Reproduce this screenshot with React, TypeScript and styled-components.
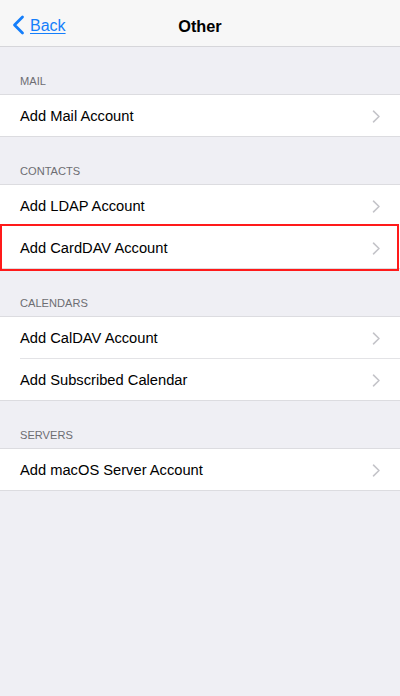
import styled, { createGlobalStyle } from "styled-components";
////////////////////////////////////////////////////////////////////////////////

type Row = { label: string; highlighted?: boolean };
type Section = { title: string; rows: Row[] };

const sections: Section[] = [
  { title: "MAIL", rows: [{ label: "Add Mail Account" }] },
  {
    title: "CONTACTS",
    rows: [
      { label: "Add LDAP Account" },
      { label: "Add CardDAV Account", highlighted: true },
    ],
  },
  {
    title: "CALENDARS",
    rows: [{ label: "Add CalDAV Account" }, { label: "Add Subscribed Calendar" }],
  },
  { title: "SERVERS", rows: [{ label: "Add macOS Server Account" }] },
];

export default function App() {
  return (
    <>
      <GlobalStyle />
      <Screen>
        <NavBar>
          <BackButton>
            <svg width="13" height="20" viewBox="0 0 13 20">
              <path
                d="M10.5 2 L2.5 10 L10.5 18"
                fill="none"
                stroke="#147efb"
                strokeWidth="2.8"
                strokeLinecap="round"
                strokeLinejoin="round"
              />
            </svg>
            <span>Back</span>
          </BackButton>
          <Title>Other</Title>
        </NavBar>

        {sections.map((section) => (
          <div key={section.title}>
            <SectionHeader>{section.title}</SectionHeader>
            <Group>
              {section.rows.map((row) => (
                <Cell key={row.label} $highlighted={row.highlighted}>
                  <span>{row.label}</span>
                  <svg width="9" height="13" viewBox="0 0 9 13">
                    <path
                      d="M1.5 1.2 L7 6.5 L1.5 11.8"
                      fill="none"
                      stroke="#c4c4c9"
                      strokeWidth="1.6"
                      strokeLinecap="round"
                      strokeLinejoin="round"
                    />
                  </svg>
                </Cell>
              ))}
            </Group>
          </div>
        ))}
      </Screen>
    </>
  );
}

const GlobalStyle = createGlobalStyle`
  html, body {
    margin: 0;
    padding: 0;
    background: #efeff4;
  }
  body {
    font-family: "Liberation Sans", Arial, sans-serif;
  }
`;

const Screen = styled.div`
  min-height: 696px;
  background: #efeff4;
`;

const NavBar = styled.div`
  position: relative;
  height: 47px;
  box-sizing: border-box;
  padding-top: 4px;
  background: #f7f7f7;
  border-bottom: 1px solid #d6d6da;
  display: flex;
  align-items: center;
  justify-content: center;
`;

const BackButton = styled.div`
  position: absolute;
  left: 12px;
  top: 4px;
  bottom: 0;
  display: flex;
  align-items: center;
  gap: 5px;
  color: #147efb;
  font-size: 16px;

  span {
    text-decoration: underline;
    text-underline-offset: 2px;
    padding-top: 2px;
  }
`;

const Title = styled.div`
  font-size: 16.3px;
  font-weight: bold;
  color: #000;
  padding-top: 3px;
`;

const SectionHeader = styled.div`
  height: 47px;
  box-sizing: border-box;
  padding: 0 20px 6px;
  display: flex;
  align-items: flex-end;
  font-size: 11.1px;
  line-height: 13px;
  color: #6d6d72;
`;

const Group = styled.div`
  background: #fff;
  border-top: 1px solid #dcdce0;
  border-bottom: 1px solid #dcdce0;
`;

const Cell = styled.div<{ $highlighted?: boolean }>`
  position: relative;
  height: 41px;
  display: flex;
  align-items: center;
  justify-content: space-between;
  padding: 1px 19px 0 20px;
  box-sizing: border-box;
  font-size: 14.7px;
  color: #000;

  & + & {
    height: 42px;
    padding-top: 2px;
  }
  & + &::before {
    content: "";
    position: absolute;
    top: 0;
    left: 20px;
    right: 0;
    height: 1px;
    background: #e3e3e6;
  }

  ${({ $highlighted }) =>
    $highlighted &&
    `
    &::after {
      content: "";
      position: absolute;
      top: -2px;
      bottom: -3px;
      left: 0;
      right: 1px;
      border: 2px solid #ff1a1a;
      z-index: 1;
    }
  `}
`;
